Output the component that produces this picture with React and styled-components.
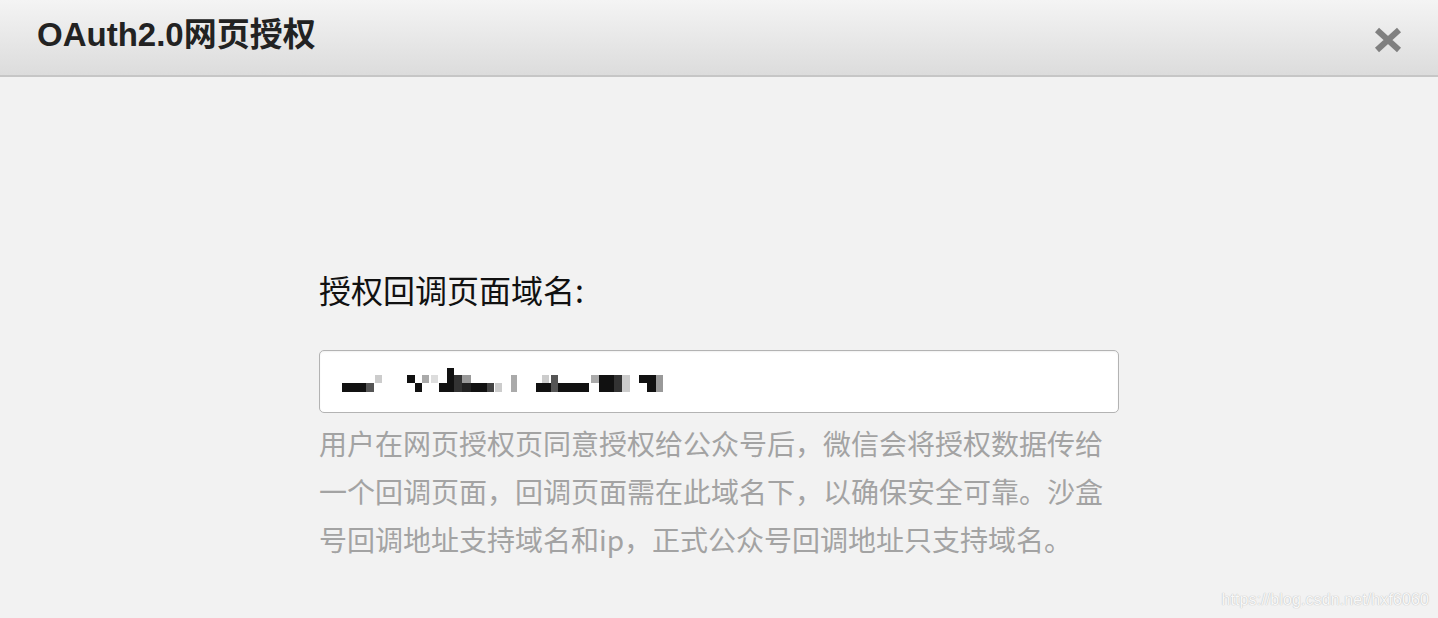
import React from 'react';
import styled, { createGlobalStyle } from 'styled-components';

const GlobalStyle = createGlobalStyle`
  html, body {
    margin: 0;
    padding: 0;
    background: #f2f2f2;
  }
  body {
    font-family: "Liberation Sans", "Noto Sans CJK SC", sans-serif;
  }
`;

const Page = styled.div`
  position: relative;
  width: 1438px;
  height: 618px;
  overflow: hidden;
  background: #f2f2f2;
  display: flex;
  flex-direction: column;
`;

const Header = styled.div`
  height: 75px;
  flex-shrink: 0;
  box-sizing: content-box;
  border-bottom: 2px solid #c6c6c6;
  background: linear-gradient(to bottom, #f4f4f4, #dcdcdc);
  display: flex;
  align-items: center;
  justify-content: space-between;
  padding: 0 34px 0 37px;
`;

const Title = styled.h1`
  margin: 0;
  font-size: 33px;
  font-weight: 700;
  color: #222;
  line-height: 1;
  margin-top: -6px;
  font-family: "Liberation Sans", "Noto Sans CJK SC", sans-serif;
`;

const CloseButton = styled.button`
  border: none;
  background: transparent;
  padding: 0;
  width: 32px;
  height: 28px;
  margin-top: 5px;
  cursor: pointer;
  display: flex;
  align-items: center;
  justify-content: center;
  svg {
    filter: blur(0.6px);
  }
`;

const Body = styled.div`
  flex: 1;
  display: flex;
  justify-content: center;
  padding-top: 188px;
`;

const Form = styled.div`
  width: 800px;
  display: flex;
  flex-direction: column;
`;

const Label = styled.label`
  font-size: 32px;
  line-height: 48px;
  color: #111;
  font-family: "Noto Sans CJK SC", sans-serif;
  margin-bottom: 37px;
`;

const InputBox = styled.div`
  box-sizing: border-box;
  width: 800px;
  height: 63px;
  border: 1.5px solid #b3b3b3;
  border-radius: 5px;
  background: #fff;
  box-shadow: inset 0 1px 2px rgba(0, 0, 0, 0.06);
  position: relative;
  svg {
    display: block;
  }
`;

const Help = styled.p`
  margin: 6px 0 0;
  font-size: 28px;
  line-height: 48px;
  color: #a3a3a3;
  font-family: "Noto Sans CJK SC", sans-serif;
`;

const Watermark = styled.div`
  position: absolute;
  right: 9px;
  bottom: 9px;
  font-size: 16px;
  font-family: "Liberation Sans", sans-serif;
  color: #f8f8f8;
  text-shadow: 0 0 1px #bdbdbd, 0 0 1px #c8c8c8;
  letter-spacing: 0.1px;
`;

const mosaic = [
  [23, 33, 24, 9, '#111'],
  [47, 33, 8, 9, '#555'],
  [56, 25, 7, 8, '#ccc'],
  [88, 25, 8, 8, '#111'],
  [96, 33, 7, 9, '#111'],
  [103, 25, 7, 8, '#aaa'],
  [112, 25, 7, 8, '#ddd'],
  [120, 33, 15, 9, '#111'],
  [128, 18, 7, 15, '#111'],
  [135, 25, 8, 17, '#333'],
  [143, 25, 9, 8, '#999'],
  [143, 33, 9, 9, '#222'],
  [152, 33, 16, 9, '#111'],
  [168, 33, 7, 9, '#444'],
  [176, 33, 7, 9, '#ccc'],
  [192, 25, 6, 17, '#aaa'],
  [217, 33, 15, 9, '#111'],
  [223, 25, 7, 8, '#ccc'],
  [232, 25, 7, 17, '#555'],
  [239, 33, 31, 9, '#111'],
  [272, 25, 8, 8, '#aaa'],
  [280, 25, 15, 17, '#111'],
  [295, 25, 8, 17, '#333'],
  [303, 25, 8, 17, '#ccc'],
  [320, 25, 8, 8, '#111'],
  [328, 25, 9, 17, '#111'],
  [337, 25, 7, 17, '#999'],
];

const Mosaic = () => (
  <svg width="360" height="60" viewBox="0 0 360 60" style={{ marginLeft: -1.5, marginTop: -1.5 }}>
    {mosaic.map(([x, y, w, h, c], i) => (
      <rect key={i} x={x} y={y} width={w} height={h} fill={c} />
    ))}
  </svg>
);

const CloseIcon = () => (
  <svg width="30" height="26" viewBox="0 0 30 26">
    <path d="M4 3 L26 23 M26 3 L4 23" stroke="#808080" strokeWidth="6" strokeLinecap="butt" fill="none" />
  </svg>
);

export default function App() {
  return (
    <>
      <GlobalStyle />
      <Page>
        <Header>
          <Title>OAuth2.0网页授权</Title>
          <CloseButton aria-label="关闭">
            <CloseIcon />
          </CloseButton>
        </Header>
        <Body>
          <Form>
            <Label>授权回调页面域名:</Label>
            <InputBox>
              <Mosaic />
            </InputBox>
            <Help>
              用户在网页授权页同意授权给公众号后，微信会将授权数据传给一个回调页面，回调页面需在此域名下，以确保安全可靠。沙盒号回调地址支持域名和ip，正式公众号回调地址只支持域名。
            </Help>
          </Form>
        </Body>
        <Watermark>https://blog.csdn.net/hxf6060</Watermark>
      </Page>
    </>
  );
}
